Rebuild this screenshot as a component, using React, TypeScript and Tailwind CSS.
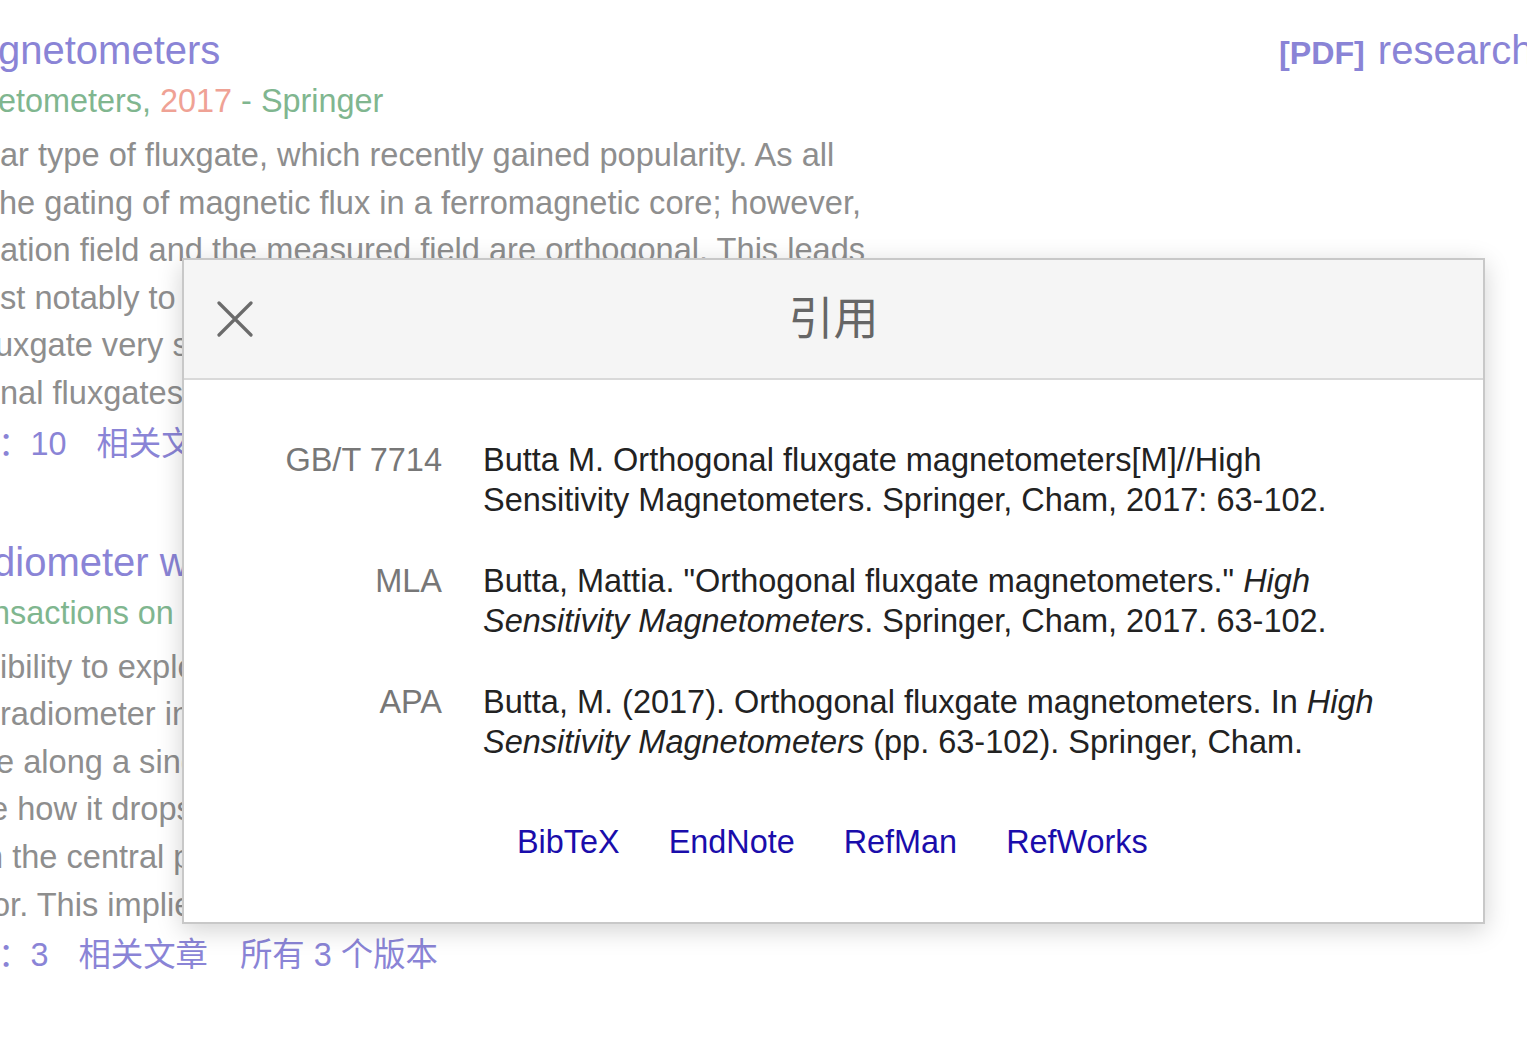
import React from "react";

const FONT = "font-['Liberation_Sans','Noto_Sans_CJK_SC',sans-serif]";

function Snip({ text, off = "" }: { text: string; off?: string }) {
  return <div className={`whitespace-nowrap leading-[47.6px] ${off}`}>{text}</div>;
}

function CloseIcon() {
  return (
    <svg width="36" height="36" viewBox="0 0 36 36" fill="none">
      <path d="M2 2L34 34M34 2L2 34" stroke="#6b6b6b" strokeWidth="3.2" strokeLinecap="round" />
    </svg>
  );
}

export default function App() {
  return (
    <div className={`relative w-[1527px] h-[1050px] overflow-hidden bg-white ${FONT}`}>
      <div className="flex">
        {/* left results column */}
        <div className="w-[1279px] shrink-0 pt-[25px]">
          {/* result 1 */}
          <div className="whitespace-nowrap text-[40px] leading-[50px] text-[#8a84d6] -ml-[2px]">gnetometers</div>
          <div className="whitespace-nowrap text-[32.4px] leading-[52px] text-[#80b68f] -ml-[2px]">
            etometers, <span className="text-[#efa295]">2017</span> - Springer
          </div>
          <div className="mt-[4px] text-[32.6px] text-[#8e8e8e]">
            <Snip text="ar type of fluxgate, which recently gained popularity. As all" />
            <Snip off="-ml-[1px]" text="he gating of magnetic flux in a ferromagnetic core; however," />
            <Snip text="ation field and the measured field are orthogonal. This leads" />
            <Snip text="st notably to a lower noise level and a smaller size of the" />
            <Snip off="-ml-[5px]" text="uxgate very suitable for applications where compactness is key" />
            <Snip text="nal fluxgates are described in detail in this chapter." />
          </div>
          <div className="mt-[1px] -ml-[2px] whitespace-nowrap text-[32.4px] leading-[52px] text-[#8a84d6]">
            ：10<span className="ml-[30px]">相关文章</span>
            <span className="ml-[32px]">所有 5 个版本</span>
          </div>

          {/* result 2 */}
          <div className="mt-[67px] whitespace-nowrap text-[40px] leading-[50px] text-[#8a84d6] -ml-[7px]">
            diometer with orthogonal fluxgate sensor
          </div>
          <div className="whitespace-nowrap text-[32.4px] leading-[52px] text-[#80b68f] -ml-[8px]">
            nsactions on Magnetics, 2015 - ieeexplore.ieee.org
          </div>
          <div className="mt-[4px] text-[32.6px] text-[#8e8e8e]">
            <Snip text="ibility to exploit the orthogonal fluxgate as a gradiometer" />
            <Snip text="radiometer in which two sensors are placed at a distance" />
            <Snip off="-ml-[4px]" text="e along a single axis of the measurement direction and" />
            <Snip off="-ml-[10px]" text="e how it drops with the distance from the source of the field" />
            <Snip off="-ml-[15px]" text="n the central part of the wire used as the sensitive core" />
            <Snip off="-ml-[8px]" text="or. This implies a strong reduction of the common mode noise." />
          </div>
          <div className="mt-[1px] -ml-[2px] whitespace-nowrap text-[32.4px] leading-[52px] text-[#8a84d6]">
            ：3<span className="ml-[30px]">相关文章</span>
            <span className="ml-[32px]">所有 3 个版本</span>
          </div>
        </div>

        {/* right column */}
        <div className="pt-[25px] whitespace-nowrap text-[#8a84d6]">
          <div className="leading-[50px]">
            <span className="text-[32.2px] font-bold">[PDF]</span>
            <span className="ml-[13px] text-[40px]">researchgate.net</span>
          </div>
        </div>
      </div>

      {/* citation dialog (overlay) */}
      <div className="absolute left-[182px] top-[258px] w-[1303px] h-[666px] border-2 border-[#c8c8c8] bg-white shadow-[0_6px_24px_rgba(0,0,0,0.18)]">
        <div className="grid h-[120px] grid-cols-[1fr_auto_1fr] items-center border-b-2 border-[#d9d9d9] bg-[#f5f5f5]">
          <div className="pl-[33px] flex items-center">
            <CloseIcon />
          </div>
          <div className="text-[45px] leading-none text-[#666666]">引用</div>
          <div />
        </div>

        <div className="pt-[39px] text-[32.5px] leading-[40px]">
          <div className="grid grid-cols-[258px_908px] gap-x-[41px] py-[20.5px]">
            <div className="text-right text-[#777777]">GB/T 7714</div>
            <div className="text-[#222222]">
              Butta M. Orthogonal fluxgate magnetometers[M]//High Sensitivity Magnetometers. Springer, Cham, 2017: 63-102.
            </div>
          </div>
          <div className="grid grid-cols-[258px_908px] gap-x-[41px] py-[20.5px]">
            <div className="text-right text-[#777777]">MLA</div>
            <div className="text-[#222222]">
              Butta, Mattia. "Orthogonal fluxgate magnetometers." <i>High Sensitivity Magnetometers</i>. Springer, Cham, 2017. 63-102.
            </div>
          </div>
          <div className="grid grid-cols-[258px_908px] gap-x-[41px] py-[20.5px]">
            <div className="text-right text-[#777777]">APA</div>
            <div className="text-[#222222]">
              Butta, M. (2017). Orthogonal fluxgate magnetometers. In <i>High Sensitivity Magnetometers</i> (pp. 63-102). Springer, Cham.
            </div>
          </div>

          <div className="mt-[40px] flex gap-[49px] pl-[333px] text-[32.4px] text-[#1a0dab]">
            <span>BibTeX</span>
            <span>EndNote</span>
            <span>RefMan</span>
            <span>RefWorks</span>
          </div>
        </div>
      </div>
    </div>
  );
}
